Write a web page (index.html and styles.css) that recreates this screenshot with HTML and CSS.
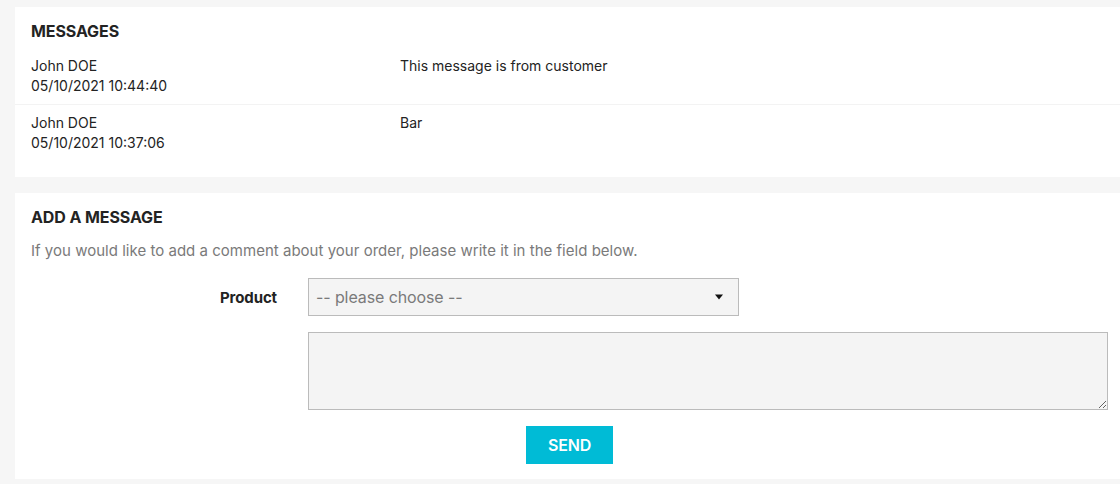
FILE: index.html
```html
<!DOCTYPE html>
<html lang="en">
<head>
<meta charset="utf-8">
<title>Messages</title>
<link rel="stylesheet" href="styles.css">
</head>
<body>
<main class="page">
  <section class="card">
    <h3 class="card-title">Messages</h3>
    <div class="msg-row">
      <div class="msg-meta">
        <div>John DOE</div>
        <div>05/10/2021 10:44:40</div>
      </div>
      <div class="msg-text">This message is from customer</div>
    </div>
    <div class="msg-row">
      <div class="msg-meta">
        <div>John DOE</div>
        <div>05/10/2021 10:37:06</div>
      </div>
      <div class="msg-text">Bar</div>
    </div>
  </section>

  <section class="card card-form">
    <h3 class="card-title">Add a message</h3>
    <p class="intro">If you would like to add a comment about your order, please write it in the field below.</p>
    <form class="msg-form">
      <div class="form-row">
        <label class="form-label" for="product">Product</label>
        <div class="select-wrap">
          <select id="product" class="form-select">
            <option>-- please choose --</option>
          </select>
          <svg class="select-arrow" width="10" height="6" viewBox="0 0 10 6"><path d="M1 0.5h8L5 5.5z" fill="#111"/></svg>
        </div>
      </div>
      <div class="form-row">
        <span class="form-label"></span>
        <textarea class="form-textarea"></textarea>
      </div>
      <div class="form-footer">
        <button type="button" class="btn-send">Send</button>
      </div>
    </form>
  </section>
</main>
</body>
</html>
```

FILE: styles.css
```css
html, body {
  margin: 0;
  padding: 0;
}
body {
  background: #f6f6f6;
  font-family: Inter, "Noto Sans", sans-serif;
  color: #232323;
  overflow: hidden;
  width: 1120px;
  height: 484px;
}
.page {
  padding: 7px 0 0 15px;
  display: flex;
  flex-direction: column;
  gap: 16px;
}
.card {
  background: #fff;
  width: 1109px;
  box-sizing: border-box;
  padding: 15px 16px 16px;
}
.card-title {
  margin: 0 0 8px;
  font-size: 16px;
  line-height: 18px;
  font-weight: 700;
  text-transform: uppercase;
  letter-spacing: -0.1px;
  color: #232323;
}
.msg-row {
  display: flex;
  margin: 0 -16px;
  padding: 8px 16px 8px;
  font-size: 14px;
  line-height: 20px;
  letter-spacing: 0;
}
.msg-row + .msg-row {
  border-top: 1px solid #f3f3f3;
}
.msg-meta {
  width: 369px;
  flex: none;
}
.msg-text {
  flex: 1;
}
.card-form {
  padding-bottom: 15px;
}
.card-form .card-title {
  margin-bottom: 13px;
}
.intro {
  margin: 0 0 15px;
  font-size: 15px;
  line-height: 24px;
  color: #7a7a7a;
  letter-spacing: 0.02px;
}
.msg-form {
  display: flex;
  flex-direction: column;
  gap: 16px;
}
.form-row {
  display: flex;
  align-items: center;
  gap: 31px;
}
.form-label {
  width: 246px;
  flex: none;
  text-align: right;
  font-size: 15px;
  font-weight: 700;
  letter-spacing: -0.1px;
}
.select-wrap {
  position: relative;
  width: 431px;
  height: 38px;
}
.form-select {
  appearance: none;
  -webkit-appearance: none;
  width: 100%;
  height: 100%;
  box-sizing: border-box;
  border: 1px solid #bbb;
  background: #f4f4f4;
  border-radius: 0;
  padding: 0 7px;
  font-family: inherit;
  font-size: 16px;
  letter-spacing: -0.1px;
  color: #7a7a7a;
  outline: none;
}
.select-arrow {
  position: absolute;
  right: 15px;
  top: 16px;
  pointer-events: none;
}
.form-textarea {
  width: 801px;
  height: 78px;
  box-sizing: border-box;
  border: 1px solid #bbb;
  background: #f4f4f4;
  border-radius: 0;
  margin: 0;
  padding: 6px;
  font-family: inherit;
  font-size: 14px;
  resize: both;
  outline: none;
  display: block;
}
.form-footer {
  display: flex;
  justify-content: center;
}
.btn-send {
  width: 87px;
  height: 38px;
  border: 0;
  background: #00bbd6;
  color: #fff;
  font-family: inherit;
  font-size: 16px;
  font-weight: 600;
  letter-spacing: -0.2px;
  text-transform: uppercase;
  padding: 0;
  cursor: pointer;
}
```
